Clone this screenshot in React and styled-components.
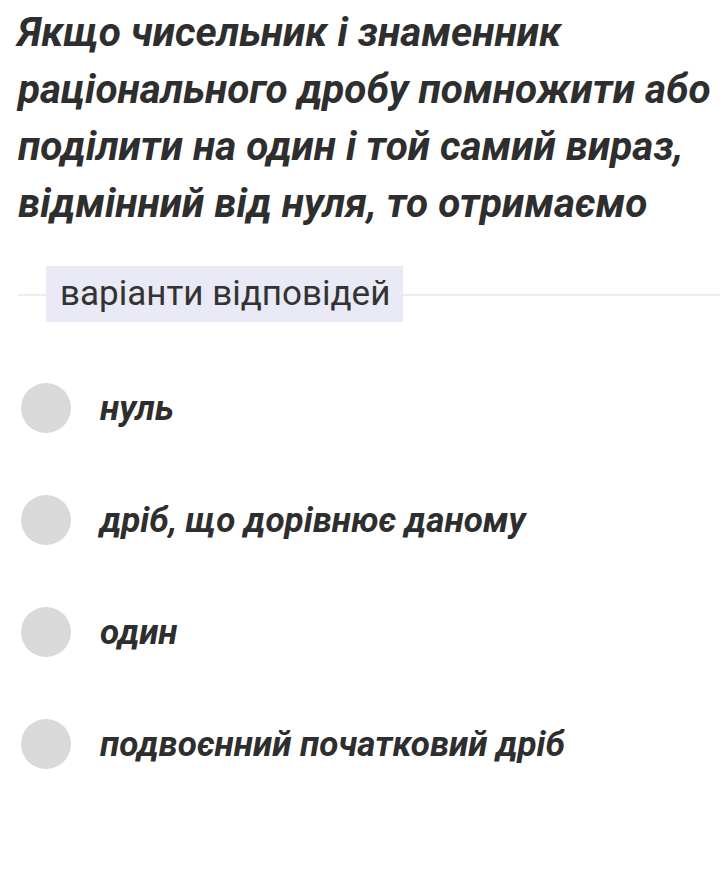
import React from 'react';
import styled, { createGlobalStyle } from 'styled-components';

const options = ['нуль', 'дріб, що дорівнює даному', 'один', 'подвоєнний початковий дріб'];

export default function App() {
  return (
    <Page>
      <GlobalStyle />
      <Question>
        Якщо чисельник і знаменник раціонального дробу помножити або поділити на один і той самий вираз, відмінний від нуля, то отримаємо
      </Question>
      <Divider>
        <Label>варіанти відповідей</Label>
      </Divider>
      <OptionList>
        {options.map((text) => (
          <Option key={text}>
            <Radio />
            <OptionText>{text}</OptionText>
          </Option>
        ))}
      </OptionList>
    </Page>
  );
}

const GlobalStyle = createGlobalStyle`
  body {
    margin: 0;
    background: #fff;
    font-family: Roboto, "Noto Sans", sans-serif;
    color: #2e2e2e;
  }
`;

const Page = styled.div`
  width: 720px;
  padding: 4px 0 0 18px;
  box-sizing: border-box;
`;

const Question = styled.div`
  font-size: 40.5px;
  line-height: 57px;
  font-weight: 700;
  font-style: italic;
`;

const Divider = styled.div`
  position: relative;
  display: flex;
  align-items: center;
  margin-top: 34px;
  padding-left: 28px;
  &::before {
    content: '';
    position: absolute;
    left: 0;
    right: 0;
    top: 50%;
    height: 2px;
    background: #ececec;
  }
`;

const Label = styled.span`
  position: relative;
  background: #e9eaf5;
  padding: 0 13px 0 14px;
  height: 56px;
  line-height: 56px;
  font-size: 35px;
  color: #333;
`;

const OptionList = styled.div`
  display: flex;
  flex-direction: column;
  gap: 62px;
  margin-top: 61px;
`;

const Option = styled.div`
  display: flex;
  align-items: center;
  gap: 29px;
  padding-left: 3px;
`;

const Radio = styled.div`
  width: 50px;
  height: 50px;
  border-radius: 50%;
  background: #d9d9d9;
  flex-shrink: 0;
`;

const OptionText = styled.span`
  font-size: 35px;
  font-weight: 700;
  font-style: italic;
`;
